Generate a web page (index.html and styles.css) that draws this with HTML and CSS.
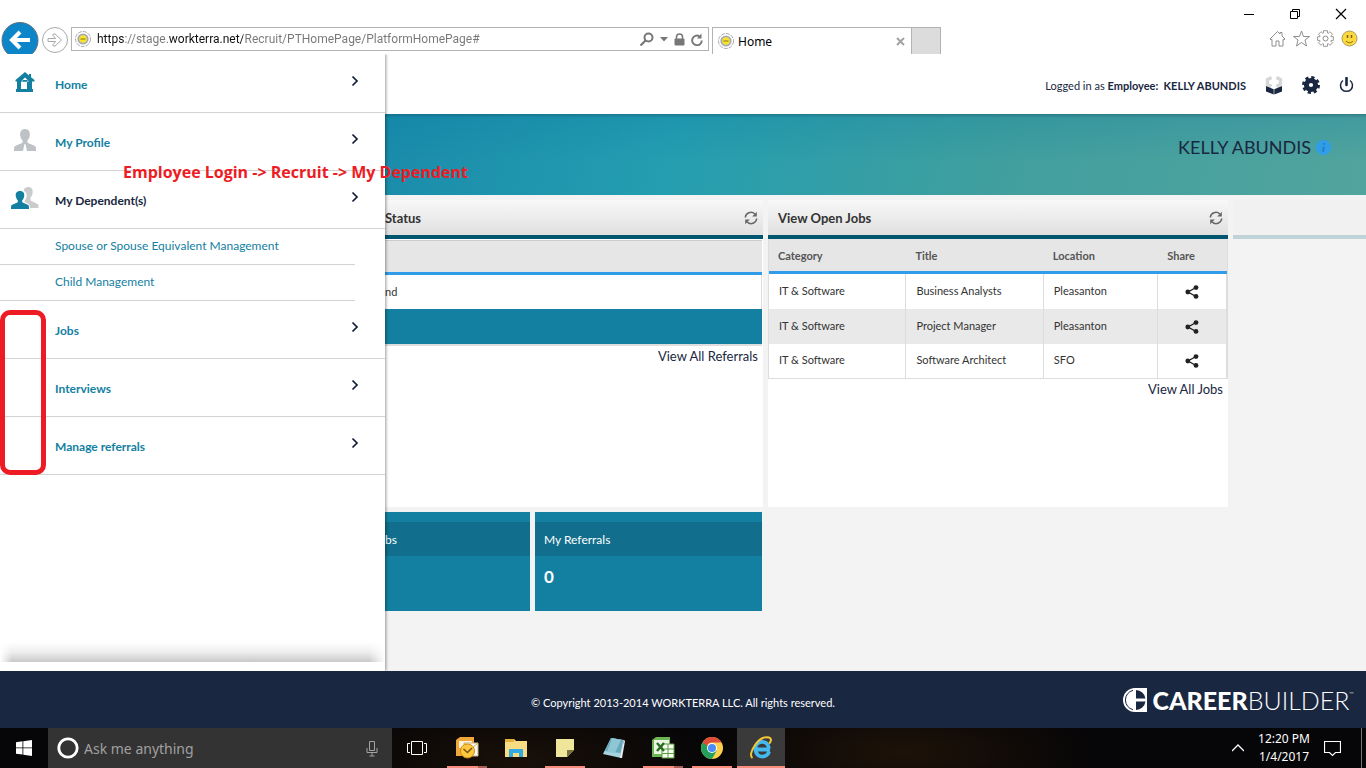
FILE: index.html
```html
<!DOCTYPE html>
<html lang="en">
<head>
<meta charset="utf-8">
<title>Home</title>
<link rel="stylesheet" href="styles.css">
</head>
<body>
<svg class="defs" aria-hidden="true">
  <symbol id="chevron" viewBox="0 0 8 12"><path d="M1.500 1.500 6 6 1.500 10.500" fill="none" stroke="#0f1c38" stroke-width="1.700"/></symbol>
  <symbol id="refresh" viewBox="0 0 14 14"><path d="M1.300 6.500A5.600 5.600 0 0 1 10.800 3M12.700 7.500A5.600 5.600 0 0 1 3.200 11" fill="none" stroke="#666" stroke-width="1.500"/><path d="M12.800.8v4.600H8.200zM1.200 13.200V8.600h4.600z" fill="#666"/></symbol>
  <symbol id="share" viewBox="0 0 14 14"><path d="M11 2.500 3 7l8 4.500" fill="none" stroke="#222" stroke-width="1.400"/><g fill="#222"><circle cx="11" cy="2.600" r="2.400"/><circle cx="2.800" cy="7" r="2.400"/><circle cx="11" cy="11.400" r="2.400"/></g></symbol>
  <symbol id="site" viewBox="0 0 16 16"><circle cx="8" cy="8" r="7.500" fill="#fff" stroke="#aaa" stroke-dasharray="4 1"/><circle cx="8" cy="8" r="5.600" fill="#aaa9b6"/><circle cx="8" cy="8" r="3.800" fill="#f6e52c"/><path d="M5.500 8h5" stroke="#a08b28" stroke-width="1.300"/></symbol>
</svg>

<header class="browser">
  <div class="titlebar">
    <button class="win" aria-label="Minimize"><svg width="12" height="12" viewBox="0 0 12 12"><path d="M1 6.500h10" stroke="#000"/></svg></button>
    <button class="win" aria-label="Restore"><svg width="12" height="12" viewBox="0 0 12 12"><path d="M1.500 3.500h7v7h-7zM3.500 3V1.500h7v7H9" fill="none" stroke="#000"/></svg></button>
    <button class="win" aria-label="Close"><svg width="12" height="12" viewBox="0 0 12 12"><path d="m1 1 10 10M11 1 1 11" stroke="#000" stroke-width="1.200"/></svg></button>
  </div>
  <div class="navbar">
    <button class="plain" aria-label="Back"><svg width="38" height="38" viewBox="0 0 38 38"><circle cx="19" cy="18.500" r="18" fill="#0c86c9" stroke="#62717c"/><path d="M29 18H12M19 10l-8 8 8 8" fill="none" stroke="#fff" stroke-width="4"/></svg></button>
    <button class="plain" aria-label="Forward"><svg width="28" height="28" viewBox="0 0 28 28"><circle cx="14" cy="13" r="12.500" fill="#fff" stroke="#a9a9a9"/><path d="M7 11.500h7.500L12 8.500V7h2l6.500 6-6.500 6h-2v-1.500l2.500-3H7z" fill="#fff" stroke="#a9a9a9"/></svg></button>
    <div class="address">
      <svg width="16" height="16"><use href="#site"/></svg>
      <input class="url" aria-label="Address" value="https://stage.workterra.net/Recruit/PTHomePage/PlatformHomePage#">
      <button class="plain" aria-label="Search"><svg width="14" height="14" viewBox="0 0 14 14"><circle cx="8.500" cy="5.500" r="4" fill="none" stroke="#777" stroke-width="2"/><path d="m5.500 8.500-5 5" stroke="#777" stroke-width="2.200"/></svg></button>
      <button class="plain" aria-label="Search options"><svg width="8" height="5" viewBox="0 0 8 5"><path d="M0 0h8L4 4.500z" fill="#777"/></svg></button>
      <button class="plain" aria-label="Security report"><svg width="11" height="13" viewBox="0 0 11 13"><rect x=".5" y="5.500" width="10" height="7" rx="1" fill="#777"/><path d="M2.500 6V4a3 3 0 0 1 6 0v2" fill="none" stroke="#777" stroke-width="1.500"/></svg></button>
      <button class="plain" aria-label="Refresh"><svg width="12" height="13" viewBox="0 0 12 13"><path d="M10.800 7.500A4.800 4.800 0 1 1 8.500 3.300" fill="none" stroke="#777" stroke-width="1.900"/><path d="M6 5.500h4.500V.500z" fill="#777"/></svg></button>
    </div>
    <div class="tab">
      <svg width="16" height="16"><use href="#site"/></svg>
      <span class="tab-title">Home</span>
      <button class="plain" aria-label="Close tab"><svg width="9" height="9" viewBox="0 0 9 9"><path d="m1 1 7 7M8 1 1 8" stroke="#a3a3a3" stroke-width="2"/></svg></button>
    </div>
    <button class="newtab" aria-label="New tab"></button>
    <div class="tools">
      <button class="plain" aria-label="Home page"><svg width="17" height="17" viewBox="0 0 17 17"><path d="M1 9 8.500 1.500 11 4V2.500h2V6l3 3-1 1-1-.5V16h-4v-5H7v5H3V9.500L2 10z" fill="none" stroke="#8e8e8e"/></svg></button>
      <button class="plain" aria-label="Favorites"><svg width="17" height="17" viewBox="0 0 17 17"><path d="m8.500 1 2 5.500h6L12 10l1.500 6-5-3.500-5 3.500L5 10 .5 6.500h6z" fill="none" stroke="#8e8e8e"/></svg></button>
      <button class="plain" aria-label="Settings"><svg width="17" height="17" viewBox="0 0 17 17"><path d="M6.500 3V.700h4V3l.8.300L13 1.700l2.500 2.500L13.800 6l.3.700h2.300v3.700h-2.300l-.3.700 1.700 1.700-2.500 2.500-1.700-1.700-.8.300v2.400h-4v-2.400l-.8-.3L4 15.300l-2.500-2.500 1.700-1.700-.3-.7H.6V6.700h2.300l.3-.7-1.700-1.800L4 1.700l1.700 1.600z" fill="none" stroke="#8e8e8e" stroke-width=".9"/><circle cx="8.500" cy="8.500" r="2.500" fill="none" stroke="#8e8e8e"/></svg></button>
      <button class="plain" aria-label="Feedback"><svg width="17" height="17" viewBox="0 0 17 17"><circle cx="8.500" cy="8.500" r="7.500" fill="#fcd93c" stroke="#a79b63"/><path d="M6.500 5v3M10.500 5v3" stroke="#766216" stroke-width="1.500"/><path d="M5 11c2 2.200 5 2.200 7 0" fill="none" stroke="#766216"/></svg></button>
    </div>
  </div>
</header>

<div class="app">
  <nav class="drawer">
    <a class="item" href="#"><span class="icon"><svg width="20" height="20" viewBox="0 0 20 20"><path d="M10 0l4 3.500V2h2v3.200L19.500 8v1.500H17V17h1v3H1v-3h1V9.500H.5V8zM6 10v7h6v-7z" fill="#1380a2" fill-rule="evenodd"/><path d="M6 9.500 10 5.500l4 4z" fill="#fff"/><path d="M7.500 9.500V8h5v1.500z" fill="#1380a2"/></svg></span><span class="label">Home</span><svg class="chev" width="8" height="12"><use href="#chevron"/></svg></a>
    <a class="item" href="#"><span class="icon"><svg width="22" height="22" viewBox="0 0 22 22"><path d="M11 0c4 0 5.200 3 4.800 6.500-.3 2.400-1.400 3.800-2.300 4.800v2.500L21 17c1 .6 1 2.500 1 5h-9l-1.500-7h-1L9 22H0c0-2.500 0-4.400 1-5l7.500-3.200v-2.500C7.500 10.300 6.500 8.900 6.200 6.500 5.800 3 7 0 11 0z" fill="#bec1c5"/></svg></span><span class="label">My Profile</span><svg class="chev" width="8" height="12"><use href="#chevron"/></svg></a>
    <a class="item current" href="#"><span class="icon"><svg width="28" height="22" viewBox="0 0 28 22"><path d="M17 0c4 0 5 2.500 4.600 6-.3 2.500-1.300 3.500-2.100 4.500v3l7 3.500c1 .6 1 2 1 4H19c0-3-1-4.500-5.500-6 0-2 3-4 2-8-.5-2-1.500-2.600-3-3C13 1 15 0 17 0z" fill="#c9cbcd"/><path d="M9 4c3.500 0 4.600 2.300 4.200 5.200-.3 2-1.200 3.300-2 4.100v2l6 2.700c.8.500.8 2 .8 4H0c0-2 0-3.500.8-4l6-2.700v-2c-.8-.8-1.700-2.100-2-4.100C4.400 6.300 5.500 4 9 4z" fill="#1380a2"/></svg></span><span class="label">My Dependent(s)</span><svg class="chev" width="8" height="12"><use href="#chevron"/></svg></a>
    <a class="subitem" href="#">Spouse or Spouse Equivalent Management</a>
    <a class="subitem" href="#">Child Management</a>
    <a class="item" href="#"><span class="icon"></span><span class="label">Jobs</span><svg class="chev" width="8" height="12"><use href="#chevron"/></svg></a>
    <a class="item" href="#"><span class="icon"></span><span class="label">Interviews</span><svg class="chev" width="8" height="12"><use href="#chevron"/></svg></a>
    <a class="item" href="#"><span class="icon"></span><span class="label">Manage referrals</span><svg class="chev" width="8" height="12"><use href="#chevron"/></svg></a>
    <div class="drawer-end"></div>
  </nav>

  <div class="main">
    <div class="userbar">
      <p>Logged in as <b>Employee:&nbsp; KELLY ABUNDIS</b></p>
      <button class="plain" aria-label="Modules"><svg width="18" height="19" viewBox="0 0 18 19"><path d="M6.500 1.500 2.500 3.500v4.500L6.500 10.500M11.500 1.500l4 2v4.500l-4 2.500" fill="none" stroke="#d5d6d8" stroke-width="3.400"/><path d="M1 10 8.700 13.200v5.300L1 15.500zM17 10 9.300 13.200v5.300l7.700-3z" fill="#192741"/></svg></button>
      <button class="plain" aria-label="Settings"><svg width="18" height="18" viewBox="0 0 18 18"><circle cx="9" cy="9" r="4.600" fill="none" stroke="#192741" stroke-width="5"/><circle cx="9" cy="9" r="7.600" fill="none" stroke="#192741" stroke-width="2.800" stroke-dasharray="3.200 2.770"/></svg></button>
      <button class="plain" aria-label="Log out"><svg width="15" height="16" viewBox="0 0 15 16"><path d="M4 3.500a6 6 0 1 0 7 0" fill="none" stroke="#192741" stroke-width="1.500"/><path d="M7.500 1v7" stroke="#192741" stroke-width="2.600" stroke-linecap="round"/></svg></button>
    </div>
    <div class="hero">
      <h1>KELLY ABUNDIS</h1>
      <svg width="15" height="15" viewBox="0 0 15 15"><circle cx="7.500" cy="7.500" r="7.500" fill="#2f9de9"/><path d="M8.400 3v1.800M7.800 6.500 7 11.800" stroke="#247fc4" stroke-width="2"/></svg>
    </div>

    <div class="dashboard">
      <section class="panel first">
        <div class="panel-head"><h2>Status</h2><button class="plain" aria-label="Refresh status"><svg width="14" height="14"><use href="#refresh"/></svg></button></div>
        <div class="referrals">
          <div class="ref-head"></div>
          <div class="ref-row">nd</div>
          <div class="ref-foot"></div>
        </div>
        <a class="more" href="#">View All Referrals</a>
      </section>
      <section class="panel">
        <div class="panel-head"><h2>View Open Jobs</h2><button class="plain" aria-label="Refresh open jobs"><svg width="14" height="14"><use href="#refresh"/></svg></button></div>
        <table class="jobs">
          <colgroup><col class="c-cat"><col class="c-title"><col class="c-loc"><col class="c-share"></colgroup>
          <thead><tr><th>Category</th><th>Title</th><th>Location</th><th>Share</th></tr></thead>
          <tbody>
            <tr><td>IT &amp; Software</td><td>Business Analysts</td><td>Pleasanton</td><td class="share"><button class="plain" aria-label="Share Business Analysts"><svg width="14" height="14"><use href="#share"/></svg></button></td></tr>
            <tr><td>IT &amp; Software</td><td>Project Manager</td><td>Pleasanton</td><td class="share"><button class="plain" aria-label="Share Project Manager"><svg width="14" height="14"><use href="#share"/></svg></button></td></tr>
            <tr><td>IT &amp; Software</td><td>Software Architect</td><td>SFO</td><td class="share"><button class="plain" aria-label="Share Software Architect"><svg width="14" height="14"><use href="#share"/></svg></button></td></tr>
          </tbody>
        </table>
        <a class="more" href="#">View All Jobs</a>
      </section>
      <section class="panel faded"><div class="panel-head"></div></section>
      <div class="tiles">
        <div class="tile cut"><h3>bs</h3></div>
        <div class="tile"><h3>My Referrals</h3><strong>0</strong></div>
      </div>
    </div>
  </div>
  <div class="note-text">Employee Login -&gt; Recruit -&gt; My Dependent</div>
  <div class="note-box"></div>
</div>

<footer class="footer">
  <p>© Copyright 2013-2014 WORKTERRA LLC. All rights reserved.</p>
  <div class="brand">
    <svg width="26" height="26" viewBox="0 0 26 26"><path d="M13 1h12v24H13A12 12 0 0 1 13 1z" fill="#fff"/><path d="M14 3v8.500h9.500A10 10 0 0 0 14 3zM14 14.500V23a10 10 0 0 0 9.500-8.500z" fill="#192741"/><path d="M11 3.300A10 10 0 0 0 11 22.700" fill="none" stroke="#192741"/></svg>
    <span class="word"><b>CAREER</b>BUILDER<sup>™</sup></span>
  </div>
</footer>

<div class="taskbar">
  <button class="start" aria-label="Start"><svg width="16" height="16" viewBox="0 0 16 16"><path d="M0 2.200 6.500 1.300v6.200H0zM7.300 1.200 16 0v7.500H7.300zM0 8.300h6.500v6.200L0 13.700zM7.300 8.300H16V16l-8.700-1.200z" fill="#fff"/></svg></button>
  <div class="search">
    <svg width="22" height="22" viewBox="0 0 22 22"><circle cx="11" cy="11" r="9.200" fill="none" stroke="#fff" stroke-width="2.800"/></svg>
    <input aria-label="Search" placeholder="Ask me anything">
    <button class="plain" aria-label="Voice search"><svg width="12" height="17" viewBox="0 0 12 17"><path d="M3.500 1.500h5v9h-5zM1 8v4.500h10V8M6 13v3M3.500 16h5" fill="none" stroke="#a2a2a2"/></svg></button>
  </div>
  <div class="apps">
    <button class="task view" aria-label="Task view"><svg width="20" height="16" viewBox="0 0 20 16"><path d="M4.500 1.500h11v13h-11zM3 3.500H.5v9H3M17 3.500h2.500v9H17" fill="none" stroke="#fff"/></svg></button>
    <button class="task open stack" aria-label="Outlook"><svg width="24" height="22" viewBox="0 0 24 22"><path d="M1 3 5 0h14v19H1z" fill="#f2a73c"/><path d="M4 4h13v7H4z" fill="#fff3d8"/><path d="M9 6h14v13H9z" fill="#fafafa" stroke="#c9b37e"/><path d="m9 6 7 6 7-6" fill="none" stroke="#e0a744"/><circle cx="12.500" cy="14" r="7" fill="#ffc83e" stroke="#cf8a16"/><path d="m8.500 12 4 3.500 4.500-4.500" fill="none" stroke="#7b5514" stroke-width="1.600"/></svg></button>
    <button class="task" aria-label="File Explorer"><svg width="22" height="20" viewBox="0 0 22 20"><path d="M0 1h9l2 2h11v16H0z" fill="#f8dc84"/><path d="M0 1h9v3H0z" fill="#e2b23b"/><path d="M4 11h14v8h-4v-4H8v4H4z" fill="#33a9e0"/></svg></button>
    <button class="task open" aria-label="Sticky Notes"><svg width="18" height="18" viewBox="0 0 18 18"><path d="M0 0h18v11l-7 7H0z" fill="#f0e69b"/><path d="M11 18v-7h7z" fill="#77713f"/></svg></button>
    <button class="task" aria-label="Notepad"><svg width="24" height="22" viewBox="0 0 24 22"><path d="M9 1 22 3l-3 18L1 17z" fill="#a7d2df"/><path d="m9 1 12 2-2.500 13L3 14z" fill="#64a9bd"/><path d="m10 1-5 14 8 1 6-13z" fill="#8fc6d3"/><path d="m22 3 1 1-3 17h-2z" fill="#eee"/></svg></button>
    <button class="task open stack" aria-label="Excel"><svg width="24" height="22" viewBox="0 0 24 22"><path d="M1 3 5 0h14v20H1z" fill="#6cb552"/><path d="M3 3h15v14H3z" fill="#eaf5e3"/><path d="M11 7h12v14H11z" fill="#f7fff3" stroke="#5a9c3e"/><path d="M11 12h12M11 16.500h12M17 7v14" stroke="#5a9c3e"/><path d="m6 6 7 8M13 6l-7 8" stroke="#2a6c22" stroke-width="2.400"/></svg></button>
    <button class="task open" aria-label="Chrome"><svg width="22" height="22" viewBox="0 0 22 22"><circle cx="11" cy="11" r="11" fill="#fdd04c"/><path d="M1.500 5.500A11 11 0 0 0 11 22l4.700-8.300L11 11z" fill="#23a05b"/><path d="M1.500 5.500A11 11 0 0 1 20.500 5.500H11a5.500 5.500 0 0 0-5.200 3.800z" fill="#de4b3b"/><path d="M1.500 5.500 6.200 14l2-3-2-2z" fill="#23a05b"/><circle cx="11" cy="11" r="5" fill="#fff"/><circle cx="11" cy="11" r="4" fill="#4c8bf5"/></svg></button>
    <button class="task open active" aria-label="Internet Explorer"><svg width="24" height="24" viewBox="0 0 24 24"><path d="M7.500 13.500H21M20 15.500C18.500 22 8 23 6.500 14 5.500 5 18.500 2 20 12.500" fill="none" stroke="#43b9ef" stroke-width="3.800"/><path d="M3.500 22C-2 19 9-1 20 1.500c3.500 1 1.500 5 0 6" fill="none" stroke="#f3c736" stroke-width="2"/></svg></button>
  </div>
  <div class="tray">
    <button class="plain" aria-label="Show hidden icons"><svg width="12" height="8" viewBox="0 0 12 8"><path d="m0 7 6-6 6 6" fill="none" stroke="#fff" stroke-width="1.300"/></svg></button>
    <div class="clock">12:20 PM<br>1/4/2017</div>
    <button class="plain" aria-label="Notifications"><svg width="17" height="17" viewBox="0 0 17 17"><path d="M.5 1.500h16v11h-5l-3 3-3-3h-5z" fill="none" stroke="#fff" stroke-width="1.200"/></svg></button>
  </div>
</div>
</body>
</html>
```

FILE: styles.css
```css
* { box-sizing: border-box; }
body { margin: 0; min-height: 100vh; display: flex; flex-direction: column; background: #fff; font-family: Lato, "Liberation Sans", sans-serif; color: #333; }
h1, h2, h3, p { margin: 0; font-weight: 400; }
a { text-decoration: none; }
svg { display: block; flex: none; }
button { border: 0; padding: 0; background: none; font: inherit; }
.defs { width: 0; height: 0; position: absolute; }
.plain { display: flex; flex: none; }

/* Browser frame */
.browser { height: 54px; overflow: hidden; background: #fff; font-family: "Noto Sans", sans-serif; }
.titlebar { display: flex; justify-content: flex-end; height: 27px; padding-right: 2px; }
.win { width: 46px; display: flex; align-items: center; justify-content: center; }
.navbar { display: flex; align-items: center; height: 27px; padding-left: 1px; }
.navbar > .plain + .plain { margin-left: 2px; }
.address { display: flex; align-items: center; gap: 6px; width: 638px; flex-shrink: 1; height: 24px; margin: 0 3px 3px 2px; padding: 0 5px 0 3px; border: 1px solid #b3b3b3; }
.url { flex: 1; min-width: 0; border: 0; padding: 0; outline: 0; font: 12px Roboto, sans-serif; color: transparent; background: linear-gradient(90deg, #111 28px, #777 28px 72px, #111 72px 146px, #777 146px); -webkit-background-clip: text; background-clip: text; }
.tab { display: flex; align-items: center; gap: 4px; width: 200px; height: 27px; padding: 0 6px 0 5px; border: 1px solid #b3b3b3; border-bottom: 0; font-size: 12px; color: #000; }
.tab-title { flex: 1; }
.newtab { width: 29px; height: 27px; background: #dcdcdc; border: 1px solid #b3b3b3; border-width: 1px 1px 0 0; }
.tools { display: flex; gap: 7px; margin-left: auto; padding: 0 8px 4px 0; }

/* Application */
.app { position: relative; flex: 1; display: flex; }
.drawer { flex: 0 0 385px; position: relative; z-index: 1; display: flex; flex-direction: column; padding: 1px 0 9px; background: #fff; box-shadow: 1px 0 3px rgba(0,0,0,.4); clip-path: inset(0 -5px 0 0); }
.item { display: flex; align-items: center; height: 58px; padding-right: 26px; border-bottom: 1px solid #d3d3d3; font-size: 12px; font-weight: 700; color: #1380a2; }
.icon { width: 55px; display: flex; justify-content: center; padding: 0 6px 3px 0; }
.label { flex: 1; padding-top: 2px; }
.current { color: #192741; }
.chev { margin-bottom: 5px; }
.subitem { height: 36px; line-height: 34px; margin-right: 30px; padding-left: 55px; border-bottom: 1px solid #d3d3d3; font-size: 12px; color: #1380a2; }
.drawer-end { height: 20px; margin-top: auto; background: linear-gradient(90deg, #fff, transparent 12px calc(100% - 16px), #fff), linear-gradient(#fff, #eee 50%, #c9c9c9); }

.main { flex: 1; min-width: 0; display: flex; flex-direction: column; background: #f3f3f3; }
.userbar { height: 60px; display: flex; align-items: center; justify-content: flex-end; gap: 19px; padding: 2px 12px 0 0; background: #fff; font-size: 11px; color: #192741; }
.hero { height: 81px; display: flex; align-items: center; justify-content: flex-end; gap: 5px; padding: 0 35px 15px 0; background: linear-gradient(rgba(20,60,80,.3), transparent 4px), linear-gradient(rgba(0,115,160,.2), transparent 60%), linear-gradient(100deg, #1a8cab, #259eb0 30%, #409f9e 62%, #52a49e); }
.hero h1 { font-size: 18px; color: #192741; }

.dashboard { display: grid; grid-template-columns: 378fr 460fr 133fr; grid-template-rows: 307px auto; gap: 5px; padding-top: 5px; }
.panel { display: flex; flex-direction: column; background: #fff; }
.panel-head { display: flex; align-items: center; justify-content: space-between; height: 39px; padding: 0 5px 0 10px; border-bottom: 4px solid #00556f; background: linear-gradient(#f8f8f8, #e0e0e0); }
.panel-head h2 { font-size: 13px; font-weight: 700; color: #333; }
.first .panel-head { padding-left: 0; }
.faded { background: #f3f3f3; }
.faded .panel-head { background: #f1f1f1; border-color: #c0d3d8; }
.referrals { margin: 1px 1px 0 0; border-top: 1px solid #ccc; border-bottom: 2px solid #ddd; font-size: 11px; }
.ref-head { height: 34px; background: #e6e6e6; border-bottom: 3px solid #2f9de9; }
.ref-row { height: 34px; line-height: 34px; border-right: 1px solid #ddd; }
.ref-foot { height: 35px; background: #1380a2; }
.more { align-self: flex-end; padding: 0 5px; font-size: 13px; line-height: 20px; color: #192741; }

.jobs { width: 100%; table-layout: fixed; border-collapse: separate; border-spacing: 0; border-left: 1px solid #ddd; border-right: 1px solid #ddd; font-size: 11px; }
.c-cat { width: 30%; }
.c-title { width: 30%; }
.c-loc { width: 25%; }
.c-share { width: 15%; }
.jobs th { height: 35px; padding: 0 9px; border-bottom: 3px solid #2f9de9; background: #e6e6e6; text-align: left; font-weight: 700; color: #555; }
.jobs td { height: 35px; padding: 0 9px 3px 10px; border-right: 1px solid #ddd; }
.jobs tr:nth-child(even) td { background: #e9e9e9; }
.jobs tr:last-child td { border-bottom: 1px solid #ddd; }
.jobs .share { padding: 0; }
.share .plain { margin: 0 auto; }

.tiles { display: grid; grid-template-columns: 145fr 227fr; gap: 5px; padding-right: 1px; }
.tile { height: 99px; padding-top: 10px; background: #1380a2; color: #fff; }
.tile h3 { height: 34px; line-height: 36px; padding-left: 9px; background: #116e8c; font-size: 12px; }
.tile strong { display: block; padding: 10px 9px; font-size: 17px; line-height: 22px; }
.cut h3 { padding-left: 0; }

/* Markup drawn over the screen */
.note-text { position: absolute; z-index: 2; left: 123px; top: 107px; font: 700 16px/22px "Open Sans", sans-serif; color: #ed1c24; white-space: nowrap; }
.note-box { position: absolute; z-index: 2; left: 0; top: 256px; width: 46px; height: 165px; border: 5px solid #ed1c24; border-radius: 10px; }

.footer { display: grid; grid-template-columns: 1fr auto 1fr; align-items: center; height: 57px; padding: 0 12px; background: #192741; color: #fff; font-size: 11px; }
.footer p { grid-column: 2; padding-top: 6px; }
.brand { display: flex; align-items: center; justify-content: flex-end; gap: 5px; }
.word { display: flex; font-size: 25px; line-height: 28px; font-weight: 300; }
.word b { font-weight: 900; }
.word sup { font-size: 6px; line-height: 16px; }

/* Taskbar */
.taskbar { display: flex; height: 40px; background: radial-gradient(ellipse 200px 60px at 66% 60%, #1d1208, transparent), radial-gradient(ellipse 200px 60px at 38% 80%, #191008, transparent), #060507; font-family: "Noto Sans", sans-serif; color: #fff; }
.start { width: 48px; display: flex; align-items: center; justify-content: center; }
.search { width: 344px; display: flex; align-items: center; gap: 5px; padding: 0 14px 0 9px; background: #333; }
.search input { flex: 1; min-width: 0; border: 0; padding: 0; outline: 0; background: none; font: 14px "Noto Sans", sans-serif; color: #fff; }
.search input::placeholder { color: #a0a0a0; opacity: 1; }
.apps { display: flex; gap: 1px; }
.task { width: 48px; display: flex; align-items: center; justify-content: center; border: solid transparent; border-width: 0 4px; }
.view { width: 50px; }
.open { background: linear-gradient(#f88d7b, #f88d7b) center bottom / 100% 2px no-repeat padding-box; }
.stack { background: linear-gradient(90deg, #f88d7b 31px, #a85f55 31px) center bottom / 100% 2px no-repeat padding-box; }
.active { border-width: 0; background: linear-gradient(#f88d7b, #f88d7b) center bottom / 100% 2px no-repeat, #3a3a3b; }
.tray { display: flex; align-items: center; gap: 14px; margin-left: auto; margin-right: 4px; padding-right: 20px; border-right: 1px solid #777; }
.clock { text-align: center; font-size: 12px; line-height: 18px; }
```
